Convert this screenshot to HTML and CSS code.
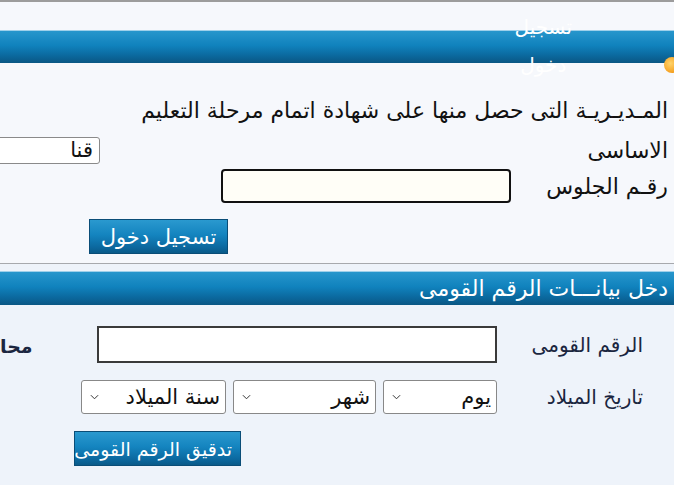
FILE: index.html
```html
<!DOCTYPE html>
<html lang="ar" dir="rtl">
<head>
<meta charset="utf-8">
<title>تسجيل دخول</title>
<link rel="stylesheet" href="styles.css">
</head>
<body>
	<div class="top-line"></div>
	<div class="login-box">
		<div class="head-bar">
			<span class="head-title">تسجيل<br>دخول</span>
			<span class="head-dot"></span>
		</div>
		<p class="question">المـديـريـة التى حصل منها على شهادة اتمام مرحلة التعليم</p>
		<div class="row-basic">
			<label class="lbl">الاساسى</label>
			<div class="city-box">قنا</div>
		</div>
		<div class="row-seat">
			<label class="lbl">رقـم الجلوس</label>
			<input class="seat-input" type="text">
		</div>
		<button class="blue-btn login-btn">تسجيل دخول</button>
	</div>
	<div class="nid-box">
		<div class="head-bar bar2">
			<span class="bar2-title">دخل بيانـــات الرقم القومى</span>
		</div>
		<div class="nid-grid">
			<label class="lbl2">الرقم القومى</label>
			<div class="nid-field">
				<input class="nid-input" type="text">
				<span class="gov-lbl">محا</span>
			</div>
			<label class="lbl2">تاريخ الميلاد</label>
			<div class="date-field">
				<div class="sel sel-day">يوم<svg viewBox="0 0 10 6"><path d="M1 1l4 4 4-4" /></svg></div>
				<div class="sel sel-month">شهر<svg viewBox="0 0 10 6"><path d="M1 1l4 4 4-4" /></svg></div>
				<div class="sel sel-year">سنة الميلاد<svg viewBox="0 0 10 6"><path d="M1 1l4 4 4-4" /></svg></div>
			</div>
		</div>
		<button class="blue-btn check-btn">تدقيق الرقم القومى</button>
	</div>
</body>
</html>
```
FILE: styles.css
```css
html,body{
	margin:0;
	padding:0;
}
body{
	width:674px;
	height:485px;
	overflow:hidden;
	background:#f6f8fc;
	font-family:"DejaVu Sans", sans-serif;
	color:#111;
}
.top-line{
	height:2px;
	background:#9c9c9c;
}
.login-box{
	padding-top:28px;
	height:233px;
}
.head-bar{
	height:32px;
	position:relative;
	background:linear-gradient(#2796cc 0%, #1082bd 45%, #0b6aa0 75%, #0a5784 100%);
	border-top:1px solid #9fd0ea;
}
.head-title{
	position:absolute;
	right:102px;
	top:-23px;
	color:#fff;
	font-size:20px;
	line-height:38px;
	text-align:center;
}
.head-dot{
	position:absolute;
	left:664px;
	top:26px;
	width:16px;
	height:16px;
	border-radius:50%;
	background:radial-gradient(circle at 40% 40%, #ffd36a, #f08a00);
}
.question{
	margin:33px 6px 0 0;
	font-size:22px;
	line-height:30px;
	letter-spacing:-0.2px;
}
.row-basic{
	display:flex;
	justify-content:space-between;
	align-items:center;
	margin-top:10px;
	height:28px;
}
.lbl{
	font-size:22px;
	margin-right:6px;
}
.city-box{
	width:96px;
	height:25px;
	margin-left:-4px;
	background:#fff;
	border:1px solid #8a8a8a;
	border-radius:3px;
	font-size:21px;
	line-height:25px;
	padding-right:6px;
}
.row-seat{
	display:flex;
	align-items:center;
	margin-top:4px;
	height:36px;
}
.seat-input{
	width:286px;
	height:30px;
	margin-right:35px;
	border:2px solid #111;
	border-radius:4px;
	background:#fffef7;
	padding:0;
}
.blue-btn{
	display:block;
	background:linear-gradient(#2a99cf 0%, #1484bf 45%, #0c6aa1 80%, #0a5a89 100%);
	border:1px solid #0a4d77;
	color:#fff;
	font-family:"DejaVu Sans", sans-serif;
	font-size:21px;
	padding:0;
	text-align:center;
	overflow:hidden;
	white-space:nowrap;
}
.login-btn{
	width:139px;
	height:35px;
	margin:15px 446px 0 0;
}
.nid-box{
	border-top:1px solid #a7a9ad;
	background:#eef3fa;
	padding-top:7px;
	height:220px;
}
.bar2{
	height:33px;
	overflow:hidden;
}
.bar2-title{
	display:block;
	color:#fff;
	font-size:22px;
	line-height:33px;
	margin-right:6px;
	white-space:nowrap;
}
.nid-grid{
	display:grid;
	grid-template-columns:146px 1fr;
	align-items:center;
	row-gap:17px;
	margin:21px 31px 0 0;
}
.lbl2{
	font-size:20px;
	color:#1b2640;
}
.nid-field{
	display:flex;
	align-items:center;
	justify-content:space-between;
	height:37px;
}
.nid-input{
	width:396px;
	height:33px;
	border:2px solid #3a3a3a;
	background:#fff;
	padding:0;
}
.gov-lbl{
	font-size:19px;
	font-weight:bold;
	color:#1b2640;
	margin-top:2px;
}
.date-field{
	display:flex;
	gap:7px;
	height:34px;
}
.sel{
	position:relative;
	display:flex;
	align-items:center;
	justify-content:space-between;
	background:#fff;
	border:1px solid #888;
	border-radius:3px;
	font-size:21px;
	padding:0 5px 0 8px;
	box-sizing:border-box;
	height:34px;
}
.sel svg{
	width:9px;
	height:6px;
	fill:none;
	stroke:#333;
	stroke-width:1.1;
}
.sel-day{
	width:114px;
}
.sel-month{
	width:143px;
}
.sel-year{
	width:145px;
}
.check-btn{
	width:167px;
	height:35px;
	margin:17px 433px 0 0;
	font-size:19px;
	text-align:right;
	padding-right:8px;
}
```
